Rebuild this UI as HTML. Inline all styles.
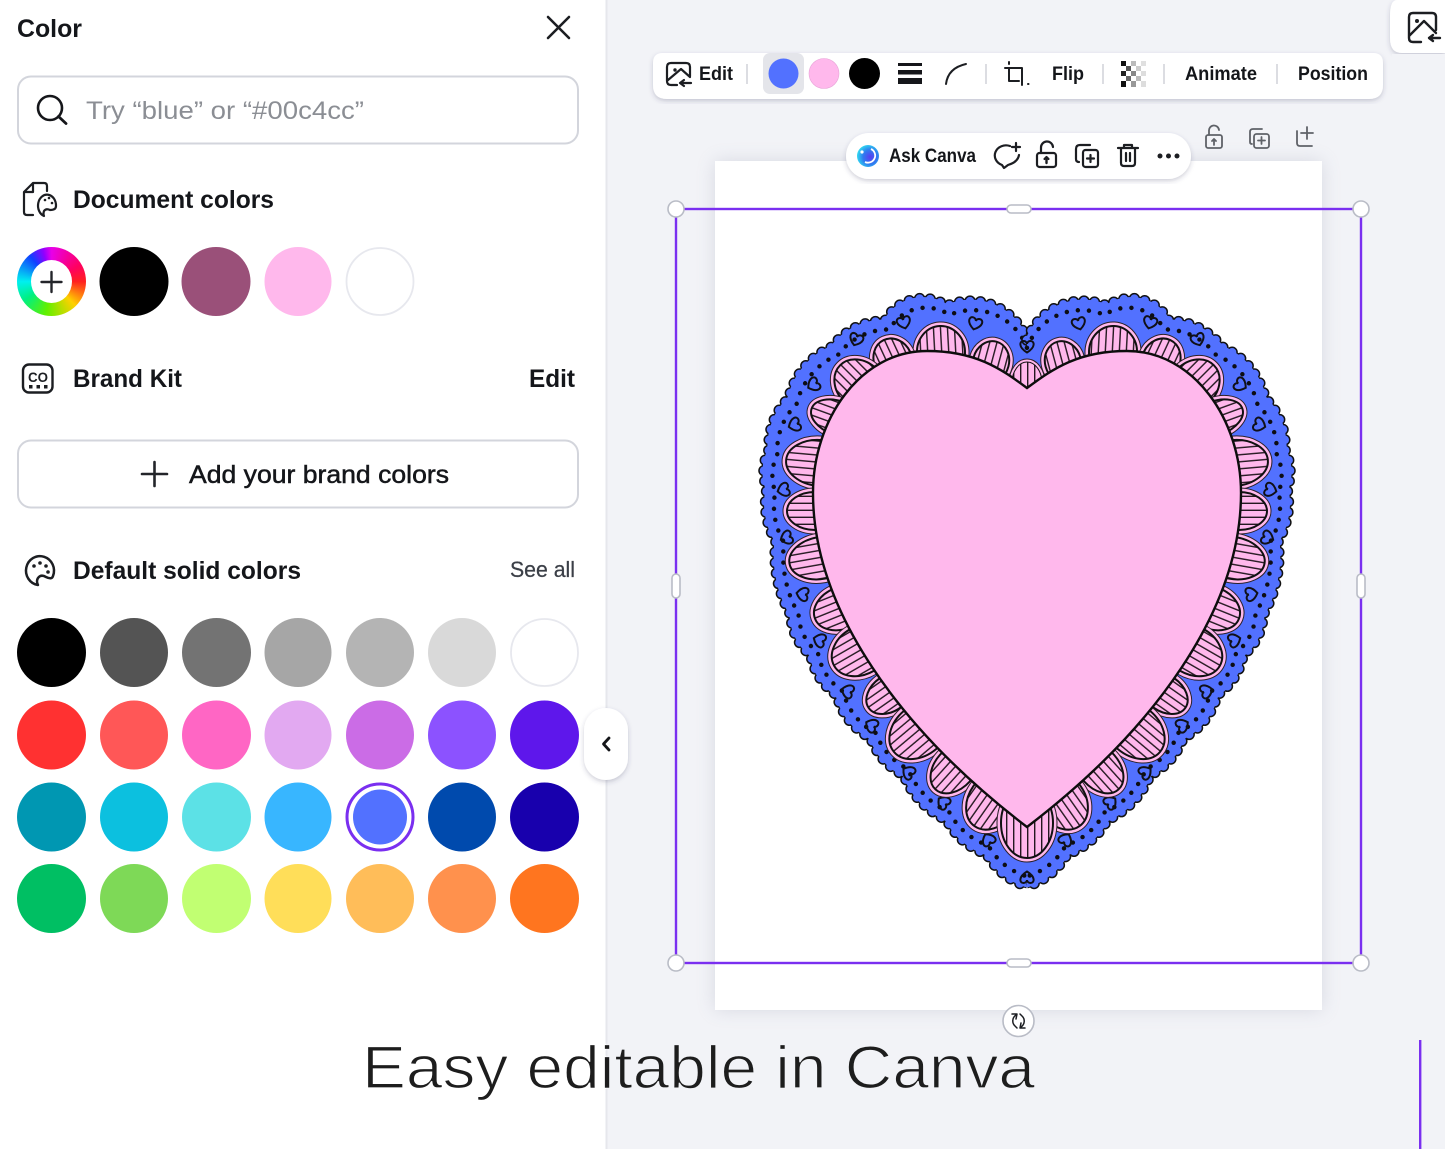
<!DOCTYPE html>
<html><head><meta charset="utf-8"><title>Easy editable in Canva</title>
<style>
html,body{margin:0;padding:0;background:#fff;width:1445px;height:1149px;overflow:hidden}
#wrap{position:relative;width:1445px;height:1149px;overflow:hidden}
svg{position:absolute;left:0;top:0}
text{font-family:"Liberation Sans",sans-serif}
.h{font-weight:700;font-size:25px;fill:#14161a}
.t{font-weight:700;font-size:19px;fill:#14161a}
.i{fill:none;stroke:#1c1e22;stroke-width:2.2;stroke-linecap:round;stroke-linejoin:round}
.g{fill:none;stroke:#5f6268;stroke-width:1.8;stroke-linecap:round;stroke-linejoin:round}
.po{fill:#ffb8ec;stroke:#2a2028;stroke-width:1}
.pi{fill:url(#hatch);stroke:#111;stroke-width:2}
#rb{position:absolute;left:17px;top:247px;width:69px;height:69px;border-radius:50%;background:conic-gradient(#e800e8 0deg,#ff0060 60deg,#ff2020 90deg,#ffd000 135deg,#60f000 190deg,#00f080 235deg,#00f0f0 270deg,#1040ff 320deg,#9000ff 345deg,#e800e8 360deg)}
#rb i{position:absolute;left:14px;top:13px;width:41px;height:43px;border-radius:50%;background:#fff}
</style></head><body><div id="wrap">
<svg width="1445" height="1149" viewBox="0 0 1445 1149" xmlns="http://www.w3.org/2000/svg">
<defs>
<filter id="s1" x="-10%" y="-10%" width="120%" height="120%"><feDropShadow dx="0" dy="2" stdDeviation="2.5" flood-color="#404060" flood-opacity=".25"/></filter>
<filter id="s2" x="-10%" y="-10%" width="120%" height="120%"><feGaussianBlur stdDeviation="9"/></filter>
<linearGradient id="capg" gradientUnits="userSpaceOnUse" x1="0" y1="0" x2="1445" y2="0"><stop offset=".4194" stop-color="#fff"/><stop offset=".4194" stop-color="#f2f3f7"/></linearGradient>
<pattern id="hatch" patternUnits="userSpaceOnUse" width="7" height="7"><rect width="7" height="7" fill="#ffb8ec"/><rect x="0" y="0" width="1.400" height="7" fill="#241820"/></pattern>
<path id="hrt" d="M0 5.500C-9 0 -7.500 -6 -3.500 -6C-1.500 -6 0 -4.500 0 -3C0 -4.500 1.500 -6 3.500 -6C7.500 -6 9 0 0 5.500Z" fill="none" stroke="#101018" stroke-width="2"/>
<path id="outline" d="M1027 340A60 60 0 0 0 947 306A43 43 0 0 0 885 321A66 66 0 0 0 832 347A74 74 0 0 0 789 398A68 68 0 0 0 769 450A50 50 0 0 0 767 489A73 73 0 0 0 776 541A120 120 0 0 0 791 615A53 53 0 0 0 811 655A60 60 0 0 0 837 695A66 66 0 0 0 871 738A65 65 0 0 0 904 775A83 83 0 0 0 947 820A70 70 0 0 0 987 854A67 67 0 0 0 1027 886"/>
<g id="half">
<use href="#outline" fill="#111" stroke="#111" stroke-width="11.500" stroke-linecap="round" stroke-dasharray="0 10.500"/>
<use href="#outline" fill="#111" stroke="#111" stroke-width="5"/>
<use href="#outline" fill="#5271ff" stroke="#5271ff" stroke-width="8.500" stroke-linecap="round" stroke-dasharray="0 10.500"/>
<use href="#outline" fill="#5271ff" stroke="#5271ff" stroke-width="3"/>
<g transform="translate(1027 585) scale(.968) translate(-1027 -585)"><use href="#outline" fill="none" stroke="#0d0d14" stroke-width="4.600" stroke-linecap="round" stroke-dasharray="0 11.500"/></g>
<use href="#hrt" transform="translate(904 323) rotate(-15)"/>
<use href="#hrt" transform="translate(856 340) rotate(20)"/>
<use href="#hrt" transform="translate(813 385) rotate(60)"/>
<use href="#hrt" transform="translate(794 425) rotate(70)"/>
<use href="#hrt" transform="translate(783 490) rotate(75)"/>
<use href="#hrt" transform="translate(786 538) rotate(70)"/>
<use href="#hrt" transform="translate(975 324) rotate(15)"/>
<use href="#hrt" transform="translate(802 594) rotate(100)"/>
<use href="#hrt" transform="translate(819 640) rotate(110)"/>
<use href="#hrt" transform="translate(847 691) rotate(110)"/>
<use href="#hrt" transform="translate(871 725) rotate(120)"/>
<use href="#hrt" transform="translate(908 772) rotate(125)"/>
<use href="#hrt" transform="translate(943 802) rotate(130)"/>
<use href="#hrt" transform="translate(988 839) rotate(150)"/>
<g transform="translate(991 362) rotate(15)"><ellipse class="po" rx="22" ry="25"/><ellipse class="pi" rx="18" ry="21"/></g>
<g transform="translate(941 352) rotate(-3)"><ellipse class="po" rx="28" ry="30"/><ellipse class="pi" rx="24" ry="26"/></g>
<g transform="translate(893 360) rotate(-25)"><ellipse class="po" rx="23" ry="26"/><ellipse class="pi" rx="19" ry="22"/></g>
<g transform="translate(860 385) rotate(-45)"><ellipse class="po" rx="27" ry="32"/><ellipse class="pi" rx="23" ry="28"/></g>
<g transform="translate(838 418) rotate(-70)"><ellipse class="po" rx="21" ry="32"/><ellipse class="pi" rx="17" ry="28"/></g>
<g transform="translate(820 463) rotate(-85)"><ellipse class="po" rx="27" ry="38"/><ellipse class="pi" rx="23" ry="34"/></g>
<g transform="translate(815 511) rotate(-90)"><ellipse class="po" rx="23" ry="32"/><ellipse class="pi" rx="19" ry="28"/></g>
<g transform="translate(821 558) rotate(-100)"><ellipse class="po" rx="25" ry="36"/><ellipse class="pi" rx="21" ry="32"/></g>
<g transform="translate(842 608) rotate(-112)"><ellipse class="po" rx="25" ry="33"/><ellipse class="pi" rx="21" ry="29"/></g>
<g transform="translate(862 650) rotate(-120)"><ellipse class="po" rx="28" ry="36"/><ellipse class="pi" rx="24" ry="32"/></g>
<g transform="translate(890 693) rotate(-125)"><ellipse class="po" rx="22" ry="30"/><ellipse class="pi" rx="18" ry="26"/></g>
<g transform="translate(920 730) rotate(-130)"><ellipse class="po" rx="29" ry="38"/><ellipse class="pi" rx="25" ry="34"/></g>
<g transform="translate(955 768) rotate(-138)"><ellipse class="po" rx="24" ry="33"/><ellipse class="pi" rx="20" ry="29"/></g>
<g transform="translate(993 800) rotate(-145)"><ellipse class="po" rx="28" ry="36"/><ellipse class="pi" rx="24" ry="32"/></g>
</g>
</defs>

<rect x="607" y="0" width="838" height="1149" fill="#f2f3f7"/>
<rect x="605.500" y="0" width="2" height="1149" fill="#e6e7ec"/>
<rect x="715" y="161" width="607" height="849" fill="#9a9cb0" opacity=".3" filter="url(#s2)"/>
<rect x="715" y="161" width="607" height="849" fill="#fff"/>

<use href="#half"/>
<use href="#half" transform="translate(2054 0) scale(-1 1)"/>
<use href="#hrt" transform="translate(1027 347)"/>
<use href="#hrt" transform="translate(1027 877) rotate(180)"/>
<g transform="translate(1027 383)"><ellipse class="po" rx="18" ry="24"/><ellipse class="pi" rx="15" ry="21" style="stroke-width:1"/></g>
<g transform="translate(1027 823)"><ellipse class="po" rx="30" ry="39"/><ellipse class="pi" rx="26" ry="35"/></g>
<path d="M1027 388C1000 368 975 351 927 351C860 351 813 420 813 493C813 610 900 730 1027 827C1154 730 1241 610 1241 493C1241 420 1194 351 1127 351C1079 351 1054 368 1027 388Z" fill="#ffb8ec" stroke="#0d0d0d" stroke-width="2.400"/>

<rect x="676" y="209" width="685" height="754" fill="none" stroke="#7a2ff0" stroke-width="2.400"/>
<g fill="#fff" stroke="#b9bcc6" stroke-width="1.600">
<circle cx="676" cy="209" r="8"/><circle cx="1361" cy="209" r="8"/><circle cx="676" cy="963" r="8"/><circle cx="1361" cy="963" r="8"/>
<rect x="1007" y="205" width="24" height="8" rx="4"/><rect x="1007" y="959" width="24" height="8" rx="4"/>
<rect x="672" y="574" width="8" height="24" rx="4"/><rect x="1357" y="574" width="8" height="24" rx="4"/>
<circle cx="1018.500" cy="1021" r="15.500"/>
</g>
<g class="i" style="stroke-width:1.500"><path d="M1016 1015A7 7 0 0 0 1015 1026L1017 1028M1021 1027A7 7 0 0 0 1022 1016L1020 1014M1012 1014L1017 1014L1016 1019M1025 1028L1020 1028L1021 1023"/></g>
<rect x="1419" y="1040" width="2.400" height="109" fill="#7a2ff0"/>

<text x="362" y="1088" font-size="60" textLength="673" lengthAdjust="spacingAndGlyphs" fill="#1d1d1d" stroke="url(#capg)" stroke-width="1.300">Easy editable in Canva</text>

<path d="M1445 0H1397Q1390 0 1390 16V38Q1390 53 1402 53H1445Z" fill="#fff" filter="url(#s1)"/>
<path d="M1392 54H1445V60H1392Z" fill="#f2f3f7"/>
<g class="i" style="stroke-width:2.400"><path d="M1436 30V17Q1436 13 1432 13H1413Q1409 13 1409 17V38Q1409 42 1413 42H1421M1409 36L1424 21L1436 33M1440 38H1429M1433 35L1429 38L1433 41"/><circle cx="1417" cy="21" r="2" fill="#1c1e22" stroke="none"/></g>

<path d="M663 53H1373Q1383 53 1383 63V85Q1383 99 1369 99H667Q653 99 653 85V63Q653 53 663 53Z" fill="#fff" filter="url(#s1)"/>
<g class="i"><path d="M690 76V67Q690 63 686 63H671Q667 63 667 67V81Q667 85 671 85H677M668 80L681 69L690 77M691 83H681M684 80L680 83L684 86"/><circle cx="675" cy="70" r="1.700" fill="#1c1e22" stroke="none"/></g>
<text class="t" x="699" y="80" textLength="34" lengthAdjust="spacingAndGlyphs">Edit</text>
<g fill="#dcdde2"><rect x="746" y="64" width="2" height="20"/><rect x="985" y="64" width="2" height="20"/><rect x="1102" y="64" width="2" height="20"/><rect x="1163" y="64" width="2" height="20"/><rect x="1276" y="64" width="2" height="20"/></g>
<rect x="763" y="53" width="41" height="41" rx="7" fill="#e4e5ea"/>
<circle cx="783.500" cy="73.500" r="15" fill="#5271ff"/>
<circle cx="824" cy="73.500" r="15" fill="#ffb8ec" stroke="#e8a4d8" stroke-width=".6"/>
<circle cx="864.500" cy="73.500" r="15.500" fill="#000"/>
<g fill="#15161a"><rect x="898" y="63" width="24" height="3"/><rect x="898" y="70" width="24" height="4.500"/><rect x="898" y="78" width="24" height="6"/></g>
<path d="M946 84Q948 68 966 64" fill="none" stroke="#1c1e22" stroke-width="2" stroke-linecap="round"/>
<g class="i" style="stroke-width:2"><path d="M1009 62V64M1005 68H1022V85M1009 68V81H1019M1028 84H1028.500"/></g>
<text class="t" x="1052" y="80" textLength="32" lengthAdjust="spacingAndGlyphs">Flip</text>
<g>
<rect x="1121" y="61" width="5" height="5" fill="#111"/><rect x="1131" y="61" width="5" height="5" fill="#bbb"/><rect x="1141" y="61" width="5" height="5" fill="#e0e0e0"/>
<rect x="1126" y="66" width="5" height="5" fill="#555"/><rect x="1136" y="66" width="5" height="5" fill="#ccc"/>
<rect x="1121" y="71" width="5" height="5" fill="#222"/><rect x="1131" y="71" width="5" height="5" fill="#888"/><rect x="1141" y="71" width="5" height="5" fill="#ddd"/>
<rect x="1126" y="76" width="5" height="5" fill="#666"/><rect x="1136" y="76" width="5" height="5" fill="#bbb"/>
<rect x="1121" y="81" width="5" height="6" fill="#111"/><rect x="1131" y="81" width="5" height="6" fill="#999"/><rect x="1141" y="81" width="5" height="6" fill="#ddd"/>
</g>
<text class="t" x="1185" y="80" textLength="72" lengthAdjust="spacingAndGlyphs">Animate</text>
<text class="t" x="1298" y="80" textLength="70" lengthAdjust="spacingAndGlyphs">Position</text>

<rect x="846" y="133" width="345" height="46" rx="23" fill="#fff" filter="url(#s1)"/>
<defs><radialGradient id="ac" cx=".6" cy=".55" r=".6"><stop offset="0" stop-color="#5a3cf0"/><stop offset=".55" stop-color="#2f7cf0"/><stop offset="1" stop-color="#30d8f0"/></radialGradient></defs>
<circle cx="868" cy="156" r="11" fill="url(#ac)"/>
<path d="M871 149A7 7 0 1 1 865 162" fill="none" stroke="#fff" stroke-width="1.800"/><circle cx="862" cy="152" r="1.600" fill="#fff"/>
<text class="t" x="889" y="162" textLength="87" lengthAdjust="spacingAndGlyphs">Ask Canva</text>
<g class="i"><path d="M1010 146A11 10 0 1 0 1002 165L1004 168L1008 165Q1018 162 1019 155M1016 143V151M1012 147H1020"/></g>
<g class="i"><rect x="1037" y="153" width="19" height="14" rx="2.500"/><path d="M1041 153V148A6 6 0 0 1 1053 147"/><path d="M1046.500 163V158" style="stroke-width:2.400"/><path d="M1044.500 159L1046.500 157L1048.500 159"/></g>
<g class="i"><rect x="1083" y="150" width="15" height="17" rx="2.500"/><path d="M1079 162Q1076 162 1076 159V149Q1076 145 1080 145H1090M1090.500 155V162M1087 158.500H1094"/></g>
<g class="i"><path d="M1118 148H1138M1124 148V145H1132V148M1121 148V163Q1121 166 1124 166H1132Q1135 166 1135 163V148M1126 153V161M1130 153V161"/></g>
<g fill="#1c1e22"><circle cx="1160" cy="156" r="2.500"/><circle cx="1168.500" cy="156" r="2.500"/><circle cx="1177" cy="156" r="2.500"/></g>

<g class="g"><rect x="1206" y="135" width="16" height="13" rx="2"/><path d="M1209 135V131A5 5 0 0 1 1219 130M1214 145V140M1212 141L1214 139L1216 141"/></g>
<g class="g"><rect x="1254" y="134" width="15" height="14" rx="2.500"/><path d="M1252 144Q1250 144 1250 142V132Q1250 129 1253 129H1262M1261.500 137V144M1258 140.500H1265"/></g>
<g class="g"><path d="M1297 131V143Q1297 146 1300 146H1312M1307 127V139M1301 133H1313"/></g>

<text class="h" x="17" y="37" textLength="65" lengthAdjust="spacingAndGlyphs">Color</text>
<path d="M548 17L569 38M569 17L548 38" fill="none" stroke="#1c1e22" stroke-width="2.600" stroke-linecap="round"/>
<rect x="18" y="76.500" width="560" height="67" rx="13" fill="#fff" stroke="#d3d5dc" stroke-width="2"/>
<circle cx="50" cy="108" r="12" fill="none" stroke="#15161a" stroke-width="2.600"/><path d="M58.500 116.500L66 123.500" stroke="#15161a" stroke-width="2.800" stroke-linecap="round"/>
<text x="86" y="119" font-size="25" fill="#8b8e94" textLength="278" lengthAdjust="spacingAndGlyphs">Try “blue” or “#00c4cc”</text>

<g class="i"><path d="M33 215H27Q24 215 24 212V192L33 183H44Q47 183 47 186V191M33 183V192H24"/><path d="M56 206A9 11 0 1 0 44 216Q43 214 44 211Q46 208 50 210Q56 210 56 206Z"/></g>
<g fill="#1c1e22"><circle cx="45" cy="200" r="1.300"/><circle cx="49" cy="198" r="1.300"/><circle cx="52" cy="203" r="1.300"/></g>
<text class="h" x="73" y="208" textLength="201" lengthAdjust="spacingAndGlyphs">Document colors</text>

<circle cx="134" cy="281.500" r="34.500" fill="#000"/>
<ellipse cx="216" cy="281.500" rx="34.500" ry="34.500" fill="#9a5079"/>
<ellipse cx="298" cy="281.500" rx="33.500" ry="34.500" fill="#ffb8ec"/>
<ellipse cx="380" cy="281.500" rx="33.500" ry="33.500" fill="#fff" stroke="#e7e8ee" stroke-width="1.800"/>

<rect x="23" y="364.500" width="29.500" height="28" rx="6" fill="none" stroke="#1c1e22" stroke-width="2.400"/>
<text x="28" y="382" font-size="14" font-weight="700" fill="#1c1e22" textLength="20" lengthAdjust="spacingAndGlyphs">CO</text>
<g fill="#1c1e22"><rect x="29" y="385" width="3.500" height="3.500"/><rect x="36.500" y="385" width="3.500" height="3.500"/><rect x="44" y="385" width="3.500" height="3.500"/></g>
<text class="h" x="73" y="387" textLength="109" lengthAdjust="spacingAndGlyphs">Brand Kit</text>
<text class="h" x="529" y="387" textLength="46" lengthAdjust="spacingAndGlyphs">Edit</text>

<rect x="18" y="440.500" width="560" height="67" rx="13" fill="#fff" stroke="#d3d5dc" stroke-width="2"/>
<path d="M154.500 462V486M142 474H167" stroke="#23252a" stroke-width="2.600" stroke-linecap="round"/>
<text x="189" y="483" font-size="25" fill="#14161a" stroke="#14161a" stroke-width=".5" textLength="260" lengthAdjust="spacingAndGlyphs">Add your brand colors</text>

<g class="i" style="stroke-width:2.500"><path d="M53 576A14 14.500 0 1 0 38 585Q36 581 38 578Q41 574 46 577Q52 580 53 576Z"/></g>
<g fill="#1c1e22"><circle cx="34" cy="566" r="1.800"/><circle cx="40" cy="563" r="1.800"/><circle cx="46" cy="566" r="1.800"/><circle cx="48" cy="572" r="1.800"/></g>
<text class="h" x="73" y="579" textLength="228" lengthAdjust="spacingAndGlyphs">Default solid colors</text>
<text x="510" y="577" font-size="22" fill="#3b3f47" stroke="#3b3f47" stroke-width=".25" textLength="65" lengthAdjust="spacingAndGlyphs">See all</text>

<g>
<circle cx="51.500" cy="652.500" r="34.500" fill="#000"/><ellipse cx="134" cy="652.500" rx="34" ry="34.500" fill="#545454"/><ellipse cx="216.500" cy="652.500" rx="34.500" ry="34.500" fill="#737373"/><ellipse cx="298" cy="652.500" rx="33.500" ry="34.500" fill="#a6a6a6"/><ellipse cx="380" cy="652.500" rx="34" ry="34.500" fill="#b4b4b4"/><ellipse cx="462" cy="652.500" rx="34" ry="34.500" fill="#d9d9d9"/><ellipse cx="544.500" cy="652.500" rx="33.500" ry="33.500" fill="#fff" stroke="#e7e8ee" stroke-width="1.800"/>
<circle cx="51.500" cy="735" r="34.500" fill="#ff3131"/><ellipse cx="134" cy="735" rx="34" ry="34.500" fill="#ff5757"/><ellipse cx="216.500" cy="735" rx="34.500" ry="34.500" fill="#ff66c4"/><ellipse cx="298" cy="735" rx="33.500" ry="34.500" fill="#e2a9f1"/><ellipse cx="380" cy="735" rx="34" ry="34.500" fill="#cb6ce6"/><ellipse cx="462" cy="735" rx="34" ry="34.500" fill="#8c52ff"/><ellipse cx="544.500" cy="735" rx="34.500" ry="34.500" fill="#5e17eb"/>
<circle cx="51.500" cy="817" r="34.500" fill="#0097b2"/><ellipse cx="134" cy="817" rx="34" ry="34.500" fill="#0cc0df"/><ellipse cx="216.500" cy="817" rx="34.500" ry="34.500" fill="#5ce1e6"/><ellipse cx="298" cy="817" rx="33.500" ry="34.500" fill="#38b6ff"/>
<ellipse cx="380" cy="817" rx="33" ry="33" fill="#fff" stroke="#7a2ff0" stroke-width="3"/><ellipse cx="380" cy="817" rx="27" ry="27.500" fill="#5271ff"/>
<ellipse cx="462" cy="817" rx="34" ry="34.500" fill="#004aad"/><ellipse cx="544.500" cy="817" rx="34.500" ry="34.500" fill="#1800ad"/>
<circle cx="51.500" cy="898.500" r="34.500" fill="#00bf63"/><ellipse cx="134" cy="898.500" rx="34" ry="34.500" fill="#7ed957"/><ellipse cx="216.500" cy="898.500" rx="34.500" ry="34.500" fill="#c1ff72"/><ellipse cx="298" cy="898.500" rx="33.500" ry="34.500" fill="#ffde59"/><ellipse cx="380" cy="898.500" rx="34" ry="34.500" fill="#ffbd59"/><ellipse cx="462" cy="898.500" rx="34" ry="34.500" fill="#ff914d"/><ellipse cx="544.500" cy="898.500" rx="34.500" ry="34.500" fill="#ff751f"/>
</g>

<rect x="584" y="708" width="44" height="72" rx="22" fill="#fff" filter="url(#s1)"/>
<path d="M609 738L603.500 744L609 750" fill="none" stroke="#15161a" stroke-width="2.800" stroke-linecap="round" stroke-linejoin="round"/>
</svg>
<div id="rb"><i></i></div>
<svg width="1445" height="1149" viewBox="0 0 1445 1149" style="pointer-events:none"><path d="M51.500 272V292M41.500 282H61.500" stroke="#23252a" stroke-width="2.400" stroke-linecap="round"/></svg>
</div></body></html>
